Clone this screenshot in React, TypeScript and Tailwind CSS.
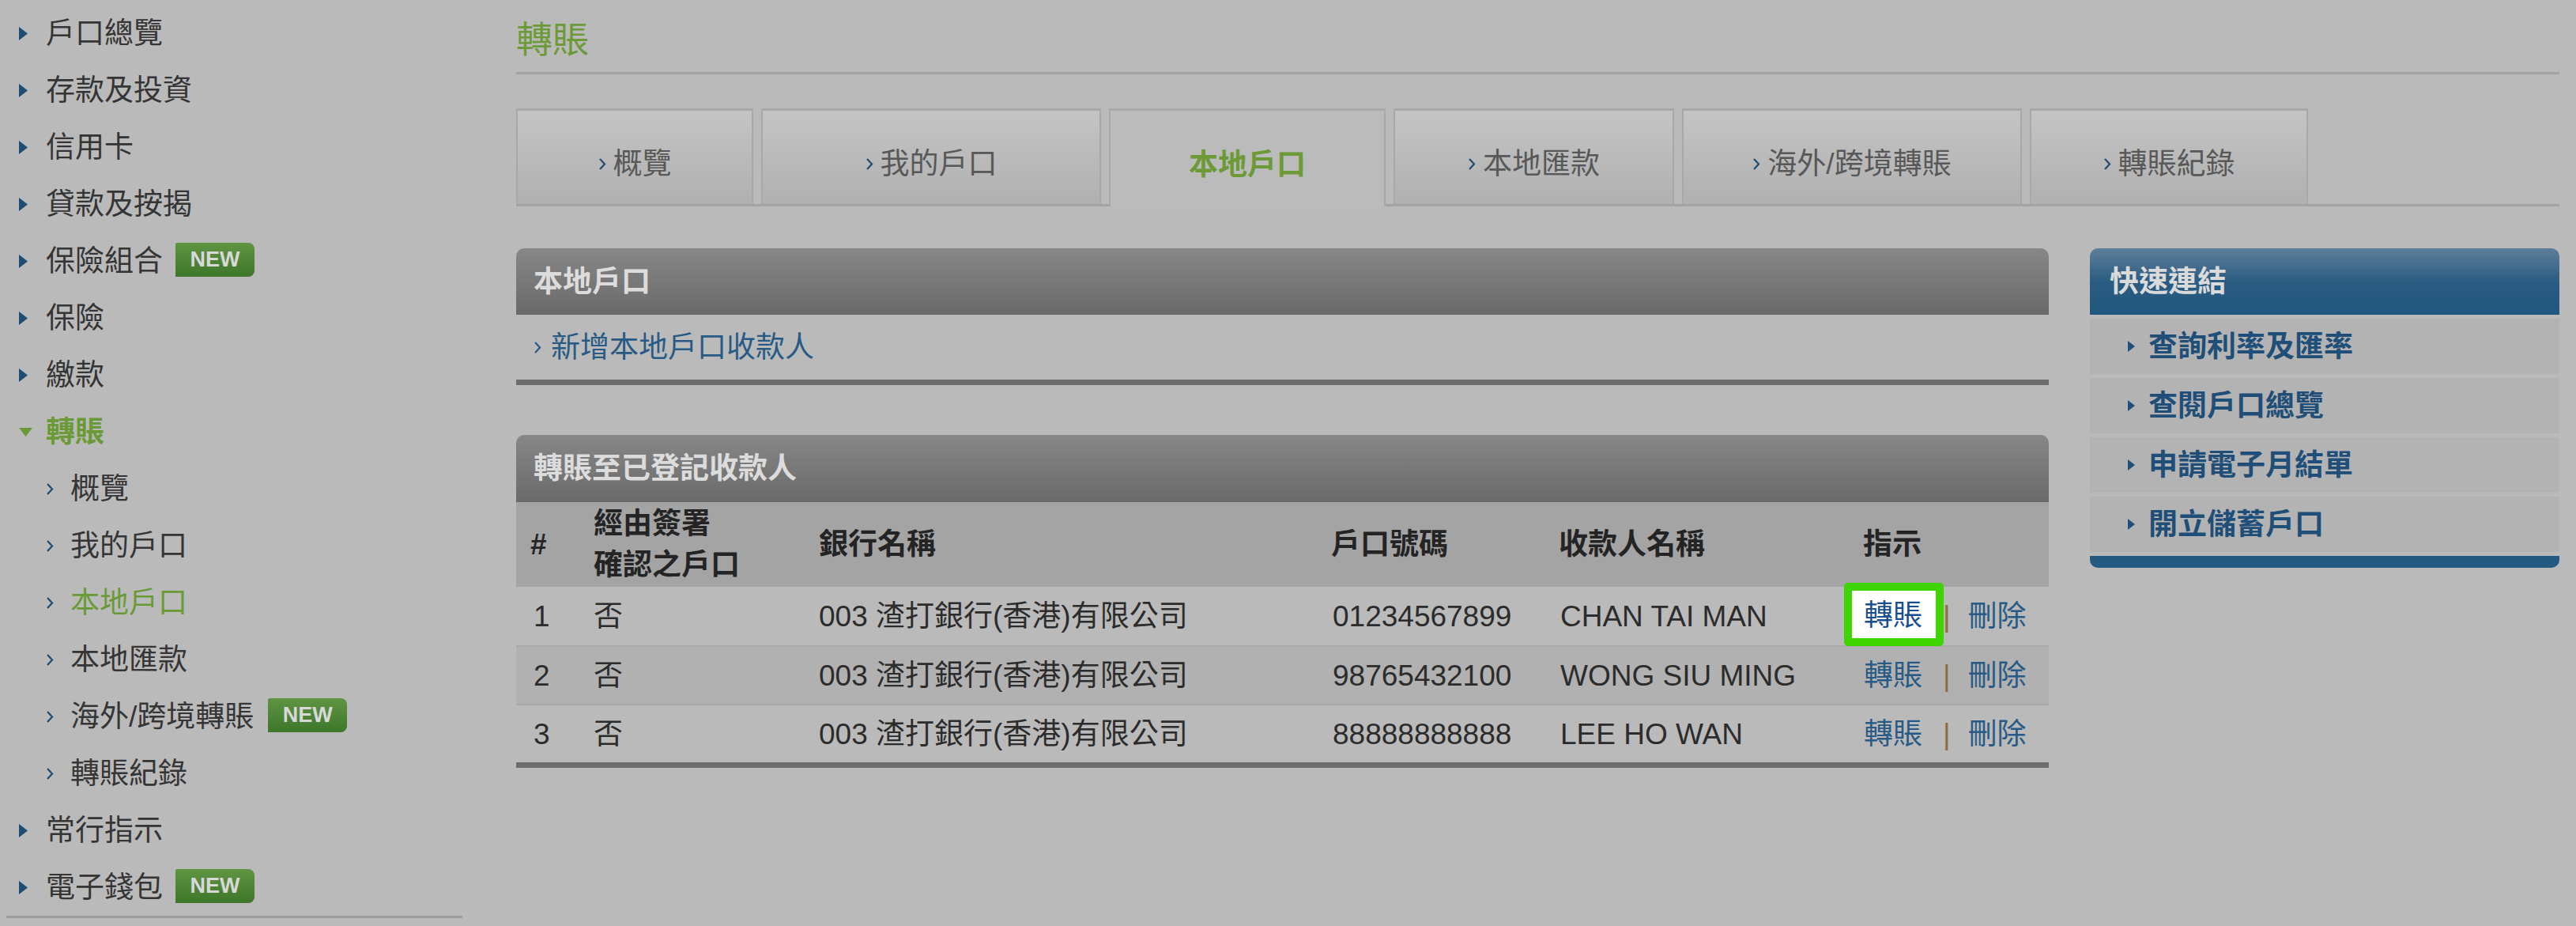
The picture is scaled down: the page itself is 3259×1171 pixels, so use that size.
import React from "react";

const FONT = "font-['Liberation_Sans','Noto_Sans_CJK_TC',sans-serif]";

function RightTri({ className }: { className?: string }) {
  return (
    <svg width="11" height="17" viewBox="0 0 11 17" className={className}>
      <path d="M0 0 L11 8.5 L0 17 Z" fill="currentColor" />
    </svg>
  );
}

function DownTri({ className }: { className?: string }) {
  return (
    <svg width="17" height="11" viewBox="0 0 17 11" className={className}>
      <path d="M0 0 L17 0 L8.5 11 Z" fill="currentColor" />
    </svg>
  );
}

function Chevron({ className }: { className?: string }) {
  return (
    <svg width="10" height="17" viewBox="0 0 10 17" className={className}>
      <path d="M2 2 L8 8.5 L2 15" fill="none" stroke="currentColor" strokeWidth="2.2" />
    </svg>
  );
}

function NewBadge({ className }: { className?: string }) {
  return (
    <span
      className={`inline-flex h-[43px] w-[100px] items-center justify-center rounded-tl-[2px] rounded-tr-[8px] rounded-br-[8px] bg-linear-to-b from-[#5f9442] to-[#3e772b] text-[27px] leading-none font-bold text-[#d8d8d8] ${className ?? ""}`}
    >
      NEW
    </span>
  );
}

type MainItem = { label: string; badge?: boolean; open?: boolean };

const mainTop: MainItem[] = [
  { label: "戶口總覽" },
  { label: "存款及投資" },
  { label: "信用卡" },
  { label: "貸款及按揭" },
  { label: "保險組合", badge: true },
  { label: "保險" },
  { label: "繳款" },
];

const subItems = [
  { label: "概覽" },
  { label: "我的戶口" },
  { label: "本地戶口", active: true },
  { label: "本地匯款" },
  { label: "海外/跨境轉賬", badge: true },
  { label: "轉賬紀錄" },
];

const mainBottom: MainItem[] = [{ label: "常行指示" }, { label: "電子錢包", badge: true }];

function SideMain({ item }: { item: MainItem }) {
  return (
    <li className="flex h-[72px] items-center">
      <span className="flex w-[50px] pl-[16px] text-[#1f4c73]">
        <RightTri />
      </span>
      <span className="text-[37px] leading-none text-[#353535]">{item.label}</span>
      {item.badge && <NewBadge className="ml-[16px] -mt-[4px]" />}
    </li>
  );
}

const tabs = [
  { label: "概覽", w: "w-[300px]" },
  { label: "我的戶口", w: "w-[430px]" },
  { label: "本地戶口", w: "w-[350px]", active: true },
  { label: "本地匯款", w: "w-[355px]" },
  { label: "海外/跨境轉賬", w: "w-[430px]" },
  { label: "轉賬紀錄", w: "w-[352px]" },
];

const rows = [
  { n: "1", acc: "01234567899", name: "CHAN TAI MAN" },
  { n: "2", acc: "98765432100", name: "WONG SIU MING" },
  { n: "3", acc: "88888888888", name: "LEE HO WAN" },
];

const quickLinks = ["查詢利率及匯率", "查閱戶口總覽", "申請電子月結單", "開立儲蓄戶口"];

const COLS = "grid grid-cols-[84px_285px_648px_288px_385px_249px]";

export default function App() {
  return (
    <div className={`flex min-h-screen w-full bg-[#bababa] ${FONT}`}>
      {/* sidebar */}
      <aside className="w-[590px] shrink-0 pl-[8px] pt-[6px]">
        <ul className="w-[577px] border-b-[3px] border-[#9d9d9d]">
          {mainTop.map((it) => (
            <SideMain key={it.label} item={it} />
          ))}
          <li className="flex h-[72px] items-center">
            <span className="flex w-[50px] pl-[16px] text-[#6a9a36]">
              <DownTri />
            </span>
            <span className="text-[37px] leading-none font-bold text-[#6a9a36]">轉賬</span>
          </li>
          {subItems.map((s) => (
            <li key={s.label} className="flex h-[72px] items-center">
              <span className="flex w-[81px] pl-[50px] text-[#1f4c73]">
                <Chevron />
              </span>
              <span className={`text-[37px] leading-none ${s.active ? "text-[#6a9a36]" : "text-[#353535]"}`}>
                {s.label}
              </span>
              {s.badge && <NewBadge className="ml-[18px] -mt-[4px]" />}
            </li>
          ))}
          {mainBottom.map((it) => (
            <SideMain key={it.label} item={it} />
          ))}
        </ul>
      </aside>

      {/* main */}
      <main className="ml-[63px] w-[2585px] shrink-0">
        <h1 className="flex h-[94px] items-center border-b-[3px] border-[#a3a3a3] pt-[8px] text-[46px] leading-none font-normal text-[#6c9a36]">
          轉賬
        </h1>

        <div className="mt-[43px] flex h-[124px] border-b-[3px] border-[#a3a3a3]">
          {tabs.map((t, i) => (
            <div
              key={t.label}
              className={`${t.w} ${i > 0 ? "ml-[10px]" : ""} flex items-center justify-center border-x-2 border-t-[3px] border-[#a8a8a8] pt-[16px] ${
                t.active
                  ? "-mb-[3px] h-[124px] bg-[#bbbbbb]"
                  : "h-[121px] bg-linear-to-b from-[#c4c4c4] to-[#b0b0b0]"
              }`}
            >
              {t.active ? (
                <span className="text-[37px] leading-none font-bold text-[#6c9a36]">{t.label}</span>
              ) : (
                <>
                  <Chevron className="mr-[9px] text-[#1f4c73]" />
                  <span className="text-[37px] leading-none text-[#585858]">{t.label}</span>
                </>
              )}
            </div>
          ))}
        </div>

        <div className="mt-[53px] flex">
          {/* left column */}
          <div className="w-[1939px] shrink-0">
            <section>
              <div className="flex h-[84px] items-center rounded-t-[10px] bg-linear-to-b from-[#878787] to-[#6a6a6a] pl-[22px] text-[37px] leading-none font-bold text-[#dcdcdc]">
                本地戶口
              </div>
              <div className="flex h-[82px] items-center pl-[22px] text-[#285a85]">
                <Chevron className="mr-[12px]" />
                <span className="text-[37px] leading-none">新增本地戶口收款人</span>
              </div>
              <div className="h-[7px] bg-[#6d6d6d]" />
            </section>

            <section className="mt-[63px]">
              <div className="flex h-[85px] items-center rounded-t-[10px] bg-linear-to-b from-[#878787] to-[#6a6a6a] pl-[22px] text-[37px] leading-none font-bold text-[#dcdcdc]">
                轉賬至已登記收款人
              </div>
              <div className={`${COLS} h-[107px] items-center bg-[#a4a4a4] text-[37px] font-bold text-[#242424]`}>
                <div className="pl-[18px] leading-none">#</div>
                <div className="pl-[14px] leading-[52px]">
                  經由簽署
                  <br />
                  確認之戶口
                </div>
                <div className="pl-[14px] leading-none">銀行名稱</div>
                <div className="pl-[14px] leading-none">戶口號碼</div>
                <div className="pl-[14px] leading-none">收款人名稱</div>
                <div className="pl-[14px] leading-none">指示</div>
              </div>
              {rows.map((r, i) => (
                <div
                  key={r.n}
                  className={`${COLS} h-[74px] items-center text-[37px] leading-none text-[#2c2c2c] ${
                    i > 0 ? "border-t-2 border-[#a9a9a9]" : ""
                  } ${i === 1 ? "bg-[#b1b1b1]" : ""}`}
                >
                  <div className="pl-[22px]">{r.n}</div>
                  <div className="pl-[14px]">否</div>
                  <div className="pl-[14px]">003 渣打銀行(香港)有限公司</div>
                  <div className="pl-[16px]">{r.acc}</div>
                  <div className="pl-[16px]">{r.name}</div>
                  <div className="flex items-center pl-[15px] text-[#285a85]">
                    {i === 0 ? (
                      <span className="relative inline-block h-[40px] leading-[40px]">
                        <span className="absolute -top-[22px] -bottom-[18px] -left-[25px] -right-[27px] rounded-[5px] border-[10px] border-[#3ed400] bg-white" />
                        <span className="relative text-[#1a4f8e]">轉賬</span>
                      </span>
                    ) : (
                      <span>轉賬</span>
                    )}
                    <span className="ml-[26px] mr-[22px] text-[#8b6d48]">|</span>
                    <span>刪除</span>
                  </div>
                </div>
              ))}
              <div className="h-[7px] bg-[#6d6d6d]" />
            </section>
          </div>

          {/* quick links */}
          <aside className="ml-[52px] w-[594px] shrink-0">
            <div className="flex h-[84px] items-center rounded-t-[10px] bg-linear-to-b from-[#5e7e99] via-[#2a5c82] to-[#21577f] pl-[25px] text-[37px] leading-none font-bold text-[#dadada]">
              快速連結
            </div>
            {quickLinks.map((q) => (
              <div
                key={q}
                className="mt-[5px] flex h-[70px] items-center bg-[#b3b3b3] pl-[48px] text-[#1f4f78]"
              >
                <RightTri className="h-[16px] w-[9px]" />
                <span className="ml-[17px] text-[37px] leading-none font-bold">{q}</span>
              </div>
            ))}
            <div className="mt-[5px] h-[15px] rounded-b-[10px] bg-[#245a82]" />
          </aside>
        </div>
      </main>
    </div>
  );
}
